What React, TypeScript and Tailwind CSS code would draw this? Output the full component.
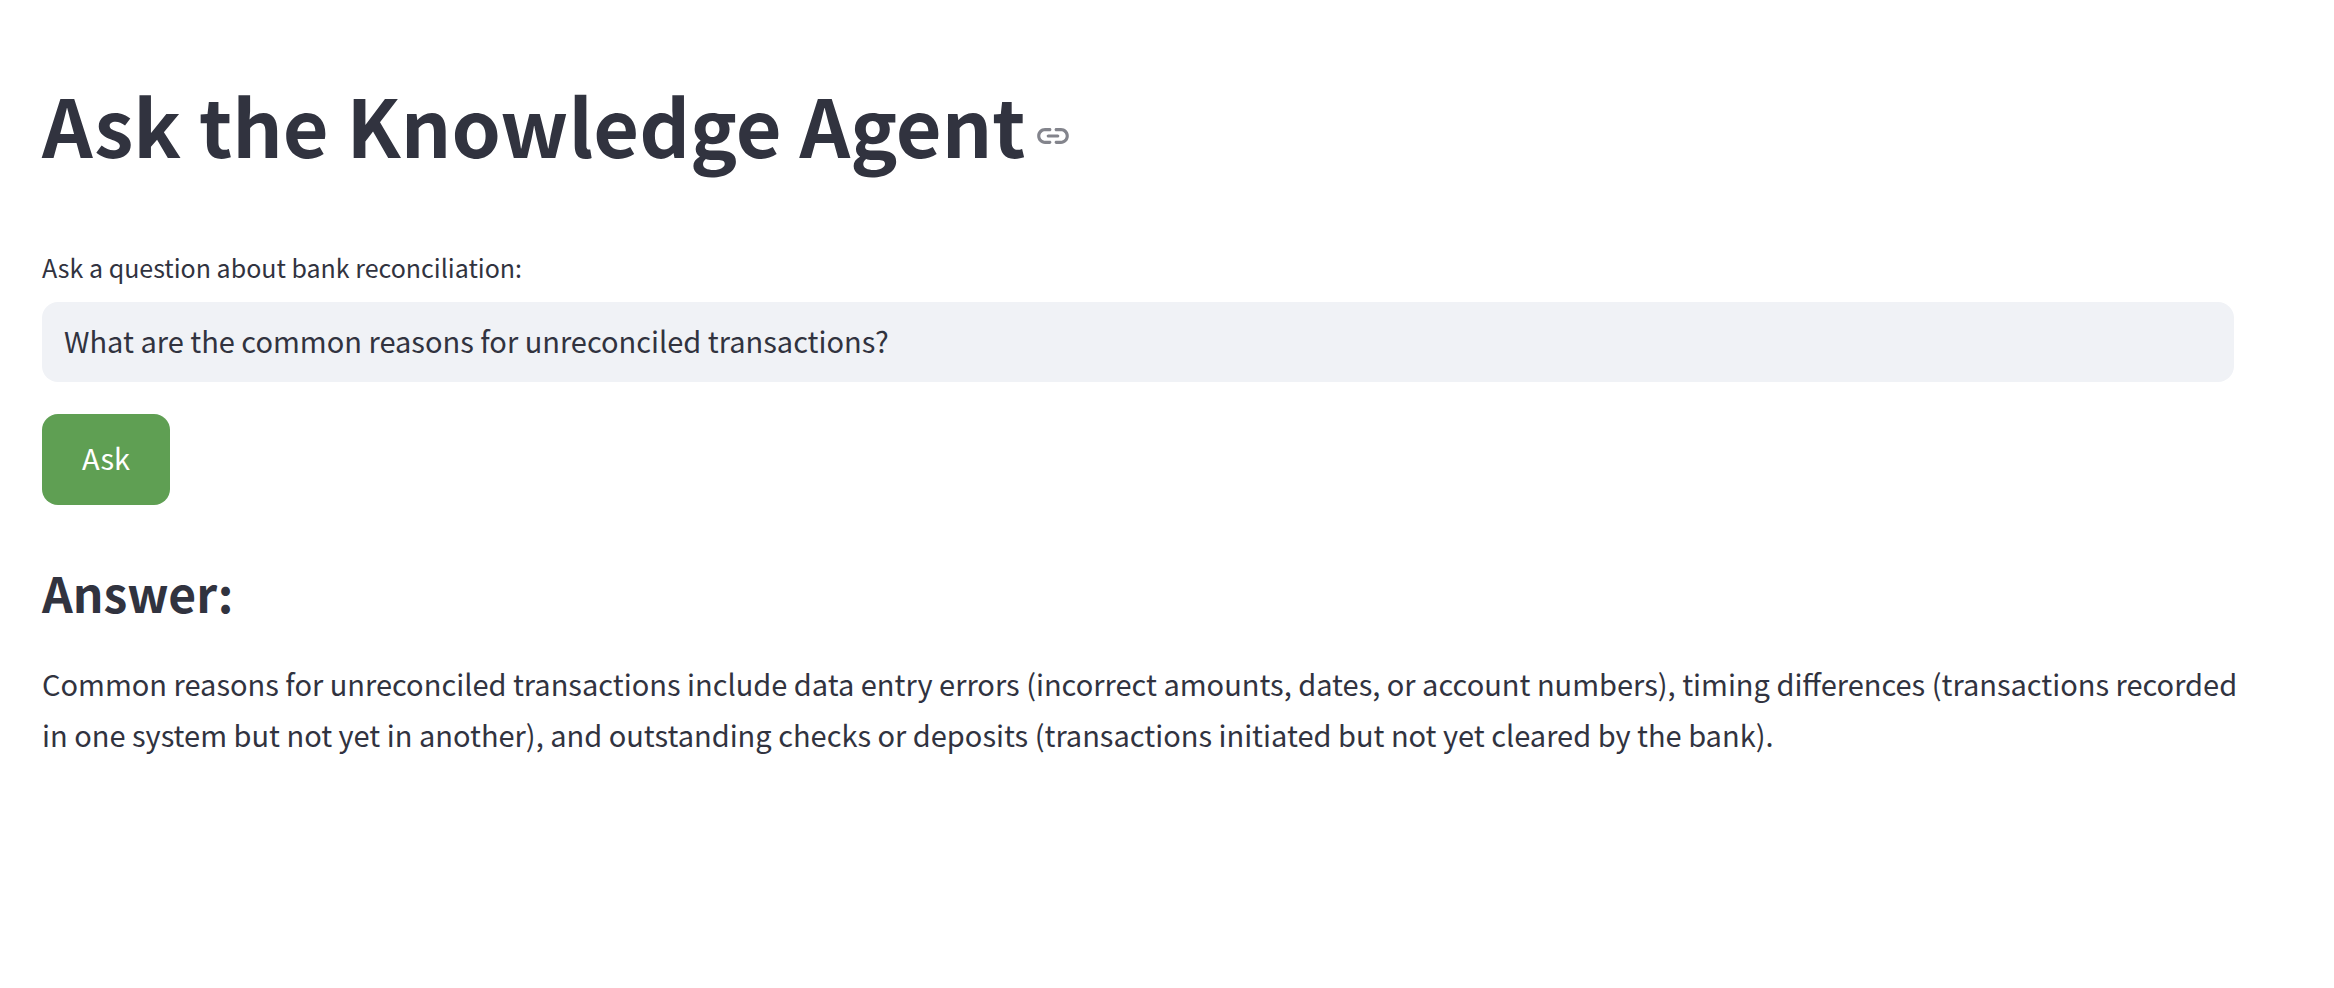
import { useState } from "react";

function LinkIcon() {
  return (
    <svg viewBox="0 0 24 24" className="size-[38px]" fill="currentColor" aria-hidden="true">
      <path d="M17 7h-3c-.55 0-1 .45-1 1s.45 1 1 1h3c1.65 0 3 1.35 3 3s-1.35 3-3 3h-3c-.55 0-1 .45-1 1s.45 1 1 1h3c2.76 0 5-2.24 5-5s-2.24-5-5-5zm-9 5c0 .55.45 1 1 1h6c.55 0 1-.45 1-1s-.45-1-1-1H9c-.55 0-1 .45-1 1zm2 3H7c-1.65 0-3-1.35-3-3s1.35-3 3-3h3c.55 0 1-.45 1-1s-.45-1-1-1H7c-2.76 0-5 2.24-5 5s2.24 5 5 5h3c.55 0 1-.45 1-1s-.45-1-1-1z" />
    </svg>
  );
}

export default function App() {
  const [question, setQuestion] = useState(
    "What are the common reasons for unreconciled transactions?"
  );

  return (
    <main className="min-h-screen bg-white pt-[71px] pr-[100px] pb-16 pl-[42px] font-['Noto_Sans_CJK_SC',sans-serif] text-[29px] leading-[51px] text-[#31333f]">
      <div id="ask" className="flex items-center gap-2">
        <h1 className="text-[79px] leading-[106px] font-bold">Ask the Knowledge Agent</h1>
        <a href="#ask" aria-label="Link to heading" className="pt-6 text-[#83848c]">
          <LinkIcon />
        </a>
      </div>

      <form className="mt-[70px]" onSubmit={(e) => e.preventDefault()}>
        <label htmlFor="question" className="block text-[25px] leading-10">
          Ask a question about bank reconciliation:
        </label>
        <input
          id="question"
          type="text"
          value={question}
          onChange={(e) => setQuestion(e.target.value)}
          className="mt-[15px] block h-20 w-full rounded-2xl bg-[#f0f2f6] px-[22px] pb-1 outline-none"
        />
        <button
          type="submit"
          className="mt-8 block rounded-2xl bg-[#5f9f53] px-10 pt-[18px] pb-[22px] text-white"
        >
          Ask
        </button>
      </form>

      <section className="mt-[53px]">
        <h2 className="text-[48px] leading-[68px] font-bold">Answer:</h2>
        <p className="mt-8 -mr-4">
          Common reasons for unreconciled transactions include data entry errors (incorrect amounts,
          dates, or account numbers), timing differences (transactions recorded in one system but
          not yet in another), and outstanding checks or deposits (transactions initiated but not
          yet cleared by the bank).
        </p>
      </section>
    </main>
  );
}
